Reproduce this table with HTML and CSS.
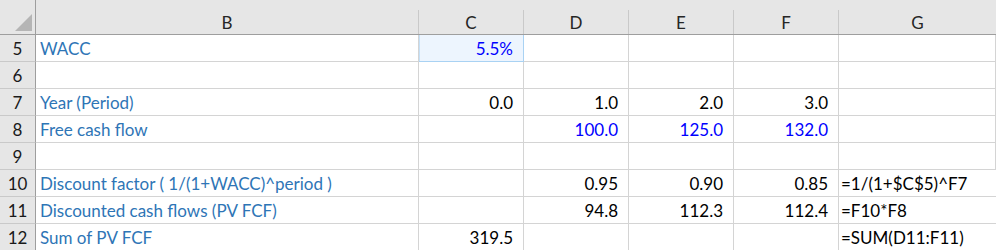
FILE: index.html
```html
<!DOCTYPE html>
<html>
<head>
<meta charset="utf-8">
<link rel="stylesheet" href="styles.css">
</head>
<body>
<div class="sheet">
  <div class="colhead">
    <div class="corner"><span class="tri"></span></div>
    <div class="ch">B</div>
    <div class="ch">C</div>
    <div class="ch">D</div>
    <div class="ch">E</div>
    <div class="ch">F</div>
    <div class="ch last">G</div>
  </div>
  <div class="grid">
    <div class="rh">5</div><div class="c lbl">WACC</div><div class="c num inp sel">5.5%</div><div class="c"></div><div class="c"></div><div class="c"></div><div class="c"></div>
    <div class="rh">6</div><div class="c lbl"></div><div class="c"></div><div class="c"></div><div class="c"></div><div class="c"></div><div class="c"></div>
    <div class="rh">7</div><div class="c lbl">Year (Period)</div><div class="c num">0.0</div><div class="c num">1.0</div><div class="c num">2.0</div><div class="c num">3.0</div><div class="c"></div>
    <div class="rh">8</div><div class="c lbl">Free cash flow</div><div class="c"></div><div class="c num inp">100.0</div><div class="c num inp">125.0</div><div class="c num inp">132.0</div><div class="c"></div>
    <div class="rh">9</div><div class="c lbl"></div><div class="c"></div><div class="c"></div><div class="c"></div><div class="c"></div><div class="c"></div>
    <div class="rh">10</div><div class="c lbl">Discount factor ( 1/(1+WACC)^period )</div><div class="c"></div><div class="c num">0.95</div><div class="c num">0.90</div><div class="c num">0.85</div><div class="c fx">=1/(1+$C$5)^F7</div>
    <div class="rh">11</div><div class="c lbl">Discounted cash flows (PV FCF)</div><div class="c"></div><div class="c num">94.8</div><div class="c num">112.3</div><div class="c num">112.4</div><div class="c fx">=F10*F8</div>
    <div class="rh">12</div><div class="c lbl">Sum of PV FCF</div><div class="c num">319.5</div><div class="c"></div><div class="c"></div><div class="c"></div><div class="c fx">=SUM(D11:F11)</div>
  </div>
</div>
</body>
</html>
```
FILE: styles.css
```css
* { box-sizing: border-box; }
html, body { margin: 0; padding: 0; background: #fff; }
body {
  font-family: Lato, "Open Sans", "Liberation Sans", sans-serif;
  font-size: 17px;
  color: #000;
  width: 996px;
  height: 250px;
  overflow: hidden;
}
.sheet { width: 996px; }
.colhead {
  display: grid;
  grid-template-columns: 36px 383px 105px 105px 105px 105px 157px;
  height: 35px;
  padding-top: 10px;
  background: #e6e6e6;
  border-bottom: 1px solid #9e9e9e;
}
.ch {
  display: flex;
  align-items: center;
  justify-content: center;
  border-right: 1px solid #c9c9c9;
  color: #262626;
  font-size: 17px;
}
.ch.last { border-right: none; }
.corner {
  display: flex;
  align-items: flex-start;
  justify-content: flex-end;
  padding: 4px 3px 0 0;
  margin-top: -10px;
  height: 34px;
  border-right: 1px solid #9e9e9e;
}
.corner .tri {
  margin-top: 10px;
  width: 0;
  height: 0;
  border-left: 17px solid transparent;
  border-bottom: 17px solid #b5b5b5;
}
.grid {
  display: grid;
  grid-template-columns: 36px 383px 105px 105px 105px 105px 157px;
  grid-auto-rows: 27px;
}
.rh {
  background: #e6e6e6;
  border-right: 1px solid #9e9e9e;
  border-bottom: 1px solid #c9c9c9;
  display: flex;
  align-items: center;
  justify-content: center;
  color: #1a1a1a;
}
.c {
  border-right: 1px solid #d4d4d4;
  border-bottom: 1px solid #d4d4d4;
  display: flex;
  align-items: center;
  white-space: nowrap;
  overflow: hidden;
}
.lbl { padding-left: 4px; color: #2e75b6; }
.num { justify-content: flex-end; padding-right: 10px; }
.inp { color: #0000ff; }
.sel { background: #edf5fe; border-right-color: #a9d2f3; border-bottom-color: #a9d2f3; box-shadow: inset 1px 0 0 #c5e0f7; }
.fx { padding-left: 2px; border-right: none; }
```
